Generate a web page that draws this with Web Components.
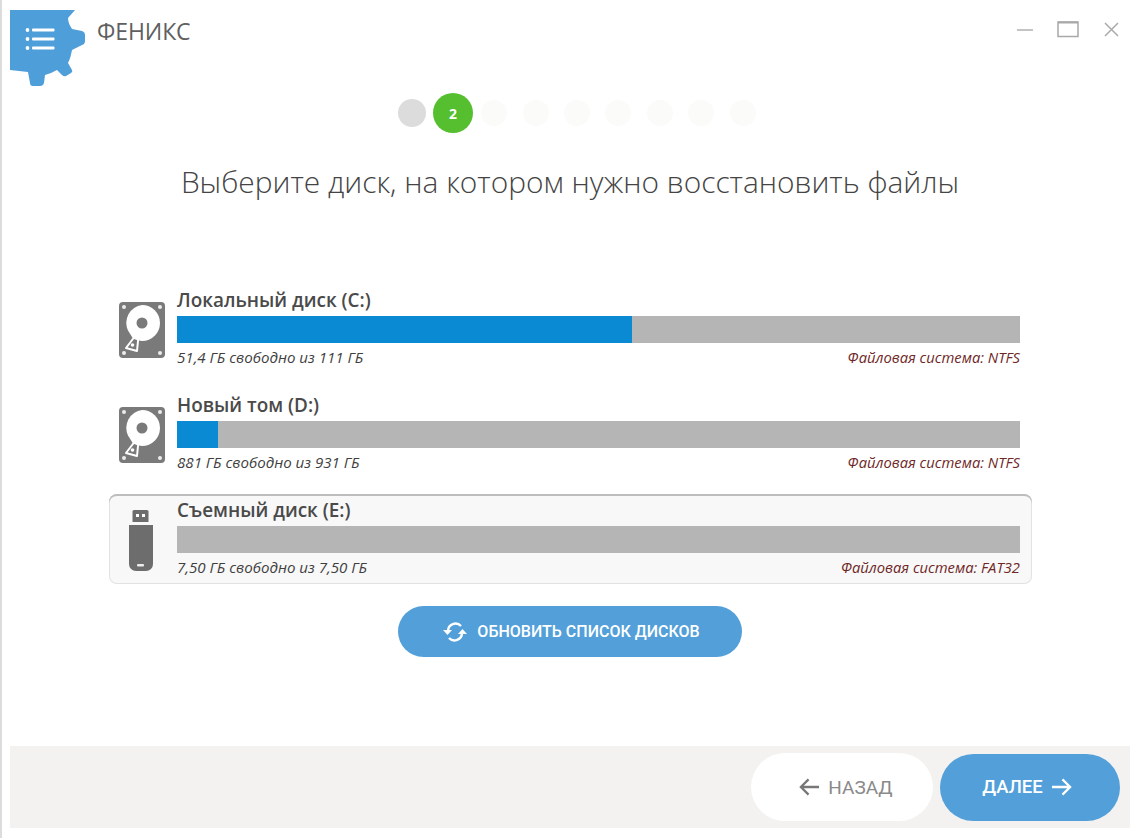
<!DOCTYPE html>
<html lang="ru">
<head>
<meta charset="utf-8">
<title>Феникс</title>
<style>
    html, body { margin: 0; background: #fff; }
    body { font-family: "Open Sans", sans-serif; }
</style>
</head>
<body>
<wizard-window>
    <title-bar slot="top">ФЕНИКС</title-bar>
    <step-dots slot="top" total="9" current="2"></step-dots>
    <h-title slot="top">Выберите диск, на котором нужно восстановить файлы</h-title>

    <drive-item icon="hdd" name="Локальный диск (C:)" used="54" free="51,4 ГБ свободно из 111 ГБ" fs="Файловая система: NTFS"></drive-item>
    <drive-item icon="hdd" name="Новый том (D:)" used="4.9" free="881 ГБ свободно из 931 ГБ" fs="Файловая система: NTFS"></drive-item>
    <drive-item icon="usb" name="Съемный диск (E:)" used="0" free="7,50 ГБ свободно из 7,50 ГБ" fs="Файловая система: FAT32" selected></drive-item>

    <pill-button slot="action" icon="refresh" w="344" h="51" size="16" style="padding-left:1px">ОБНОВИТЬ СПИСОК ДИСКОВ</pill-button>

    <pill-button slot="footer" icon="back" kind="ghost" w="182" h="68" size="19">НАЗАД</pill-button>
    <pill-button slot="footer" icon="next" trailing w="180" h="67" size="18.5">ДАЛЕЕ</pill-button>
</wizard-window>

<script>
const ICONS = {
    hdd: `<svg width="46" height="56" viewBox="0 0 46 56">
        <rect width="46" height="56" rx="4" fill="#7a7a7a"/>
        <g fill="#ececec"><circle cx="5" cy="5" r="2"/><circle cx="41" cy="5" r="2"/><circle cx="5" cy="51" r="2"/><circle cx="41" cy="51" r="2"/></g>
        <path d="M23 3a18 18 0 0 1 0 36a18 18 0 0 1-9-2.500l-5-8a18 18 0 0 1 14-25.500z" fill="#fff"/>
        <circle cx="23" cy="21" r="5.500" fill="#7a7a7a"/>
        <path d="M20 29 L7 46 L18 49 Z" fill="none" stroke="#fff" stroke-width="2" stroke-linejoin="round"/>
        <circle cx="13.500" cy="43" r="1.800" fill="#fff"/>
    </svg>`,
    usb: `<svg style="margin-right:3px" width="26" height="61" viewBox="0 0 26 61">
        <path d="M6 0h13a1.500 1.500 0 0 1 1.500 1.500V12h-16V1.500A1.500 1.500 0 0 1 6 0z" fill="#6d6d6d"/>
        <rect x="8" y="4" width="3" height="3" fill="#fff"/><rect x="14" y="4" width="3" height="3" fill="#fff"/>
        <path d="M1 15h24v39a7 7 0 0 1-7 7H8a7 7 0 0 1-7-7z" fill="#6d6d6d"/>
        <rect x="9" y="54" width="7" height="2.500" rx="1" fill="#eee"/>
    </svg>`,
    refresh: `<svg width="28" height="22" viewBox="0 0 26 22" fill="none" stroke="#fff" stroke-width="2.400">
        <path d="M6 10a7.500 7.500 0 0 1 13-5"/>
        <path d="M20 12a7.500 7.500 0 0 1-13 5"/>
        <path d="M1 9h9l-4.500 5z" fill="#fff" stroke="none"/>
        <path d="M16 13h9l-4.500-5z" fill="#fff" stroke="none"/>
    </svg>`,
    back: `<svg width="21" height="20" viewBox="0 0 22 20" fill="none" stroke="#777" stroke-width="2.400"><path d="M21 10H2M10 2l-8 8 8 8"/></svg>`,
    next: `<svg width="21" height="20" viewBox="0 0 22 20" fill="none" stroke="#fff" stroke-width="2.400"><path d="M1 10h19M12 2l8 8-8 8"/></svg>`
}

class WizardWindow extends HTMLElement {
    constructor() {
        super()
        const root = this.attachShadow({ mode: 'open' })
        root.innerHTML = `<style>
            :host { display: flex; flex-direction: column; width: 1140px; height: 838px; box-sizing: border-box; border-left: 2px solid #dcdcdc; background: #fff; }
            .drives { display: flex; flex-direction: column; gap: 15px; margin: 81px 0 0 107px; width: 923px; }
            .action { display: flex; justify-content: center; width: 1136px; margin-top: 22px; }
            footer { display: flex; justify-content: flex-end; align-items: center; gap: 7px; box-sizing: border-box; width: 1120px; height: 82px; margin: 89px 0 0 8px; padding: 0 10px 0 0; background: #f3f2f0; }
        </style>
        <slot name="top"></slot>
        <div class="drives"><slot></slot></div>
        <div class="action"><slot name="action"></slot></div>
        <footer><slot name="footer"></slot></footer>`
    }
}

class TitleBar extends HTMLElement {
    constructor() {
        super()
        const root = this.attachShadow({ mode: 'open' })
        root.innerHTML = `<style>
            :host { display: flex; align-items: flex-start; height: 93px; box-sizing: border-box; padding: 10px 21px 0 8px; }
            svg { display: block; flex: none; }
            .name { font: 400 23px "Open Sans", sans-serif; color: #5f5f5f; margin: 4px 0 0 11px; line-height: 34px; letter-spacing: -.1px; flex: 1; }
            .controls { display: flex; align-items: center; gap: 24px; margin-top: 11px; }
            .controls svg:last-child { margin-left: 1px; }
        </style>
        <svg width="76" height="76" viewBox="10 10 76 76">
            <path fill="#4e9ed9" d="M10 10H75L68 18C68 22 70 26 72 29L82 31Q85 32 85 35V41Q85 44 82 45L72 50C71 55 70 59 68 63L72 70Q73 72 71 73L66 76Q64 77 62 75L57 70C53 72 49 74 45 75L44 83Q43 86 40 86H33Q30 86 30 83L28 72 10 70Z"/>
            <g fill="#fff"><circle cx="27.500" cy="30" r="1.900"/><circle cx="27.500" cy="39" r="1.900"/><circle cx="27.500" cy="48" r="1.900"/>
            <rect x="32" y="28.500" width="22.500" height="3" rx="1"/><rect x="32" y="37.500" width="22.500" height="3" rx="1"/><rect x="32" y="46.500" width="22.500" height="3" rx="1"/></g>
        </svg>
        <div class="name"><slot></slot></div>
        <div class="controls">
            <svg width="16" height="17" viewBox="0 0 16 17"><path d="M0 9h16" stroke="#b0b0b0" stroke-width="1.500"/></svg>
            <svg width="22" height="17" viewBox="0 0 22 17"><rect x="1" y="1" width="20" height="14.500" fill="none" stroke="#a8a8a8" stroke-width="1.500"/><path d="M1 1.500h20" stroke="#a8a8a8" stroke-width="2"/></svg>
            <svg width="15" height="15" viewBox="0 0 15 15"><path d="M1 1l13 13M14 1L1 14" stroke="#aaa" stroke-width="1.500"/></svg>
        </div>`
    }
}

class StepDots extends HTMLElement {
    constructor() {
        super()
        const total = parseInt(this.getAttribute('total'), 10) || 9
        const current = parseInt(this.getAttribute('current'), 10) || 1
        const root = this.attachShadow({ mode: 'open' })
        let dots = ''
        for (let i = 1; i <= total; i++) {
            const cls = i === current ? 'now' : (i < current ? 'done' : '')
            dots += `<span class="${cls}">${i === current ? i : ''}</span>`
        }
        root.innerHTML = `<style>
            :host { display: flex; justify-content: center; align-items: center; gap: 15.400px; height: 40px; width: 1136px; padding-left: 6.600px; box-sizing: content-box; font: 700 14px "Open Sans", sans-serif; }
            span { width: 26px; height: 26px; border-radius: 50%; background: #fbfbf9; display: flex; align-items: center; justify-content: center; }
            .done { width: 28px; height: 28px; background: #dcdcdc; }
            .now { width: 40px; height: 40px; margin: 0 -7px 0 -8px; background: #56bf2f; color: #fff; }
        </style>${dots}`
    }
}

class HTitle extends HTMLElement {
    constructor() {
        super()
        const root = this.attachShadow({ mode: 'open' })
        root.innerHTML = `<style>
            :host { display: block; width: 1136px; margin-top: 28px; text-align: center; font: 300 29.880px/42px "Open Sans", sans-serif; color: #444; }
        </style><slot></slot>`
    }
}

class DriveItem extends HTMLElement {
    constructor() {
        super()
        const used = parseFloat(this.getAttribute('used')) || 0
        const root = this.attachShadow({ mode: 'open' })
        root.innerHTML = `<style>
            :host { display: grid; grid-template-columns: 68px 1fr; height: 90px; box-sizing: border-box; padding-right: 12px; border-radius: 8px; }
            :host([selected]) { background: #f8f8f8; box-shadow: inset 0 2px 0 #bdbdbd, inset 0 0 0 1px #e2e2e2; }
            .icon { display: flex; justify-content: center; align-items: center; padding: 2px 2px 0 0; }
            .body { display: flex; flex-direction: column; padding-top: 5px; }
            .name { font: 600 18.900px/22px "Open Sans", sans-serif; color: #4a4a4a; }
            .bar { height: 27px; margin-top: 5px; background: #b5b5b5; }
            .fill { height: 100%; background: #0a8ad3; width: ${used}%; }
            .meta { display: flex; justify-content: space-between; font: italic 400 15.100px/17px "Open Sans", sans-serif; color: #3f3f3f; margin-top: 6px; }
            .fs { color: #6e2626; font-size: 14.750px; }
        </style>
        <div class="icon">${ICONS[this.getAttribute('icon')]}</div>
        <div class="body">
            <div class="name">${this.getAttribute('name')}</div>
            <div class="bar"><div class="fill"></div></div>
            <div class="meta"><span>${this.getAttribute('free')}</span><span class="fs">${this.getAttribute('fs')}</span></div>
        </div>`
    }
}

class PillButton extends HTMLElement {
    constructor() {
        super()
        const w = this.getAttribute('w'), h = this.getAttribute('h')
        const icon = ICONS[this.getAttribute('icon')]
        const root = this.attachShadow({ mode: 'open' })
        root.innerHTML = `<style>
            :host { display: inline-flex; align-items: center; justify-content: center; gap: 8px; box-sizing: border-box; width: ${w}px; height: ${h}px; border-radius: 26px; background: #529fd9; color: #fff; font: 500 ${this.getAttribute('size')}px Roboto, sans-serif; flex: none; }
            :host([kind="ghost"]) { background: #fff; color: #8a8a8a; font-weight: 400; border-radius: 34px; padding-left: 8px; }
            :host([trailing]) { padding-right: 6px; }
            :host([slot="footer"]) { border-radius: 34px; }
            svg { display: block; }
        </style>
        ${this.hasAttribute('trailing') ? '' : icon}<span><slot></slot></span>${this.hasAttribute('trailing') ? icon : ''}`
    }
}

customElements.define('wizard-window', WizardWindow)
customElements.define('title-bar', TitleBar)
customElements.define('step-dots', StepDots)
customElements.define('h-title', HTitle)
customElements.define('drive-item', DriveItem)
customElements.define('pill-button', PillButton)
</script>
</body>
</html>
